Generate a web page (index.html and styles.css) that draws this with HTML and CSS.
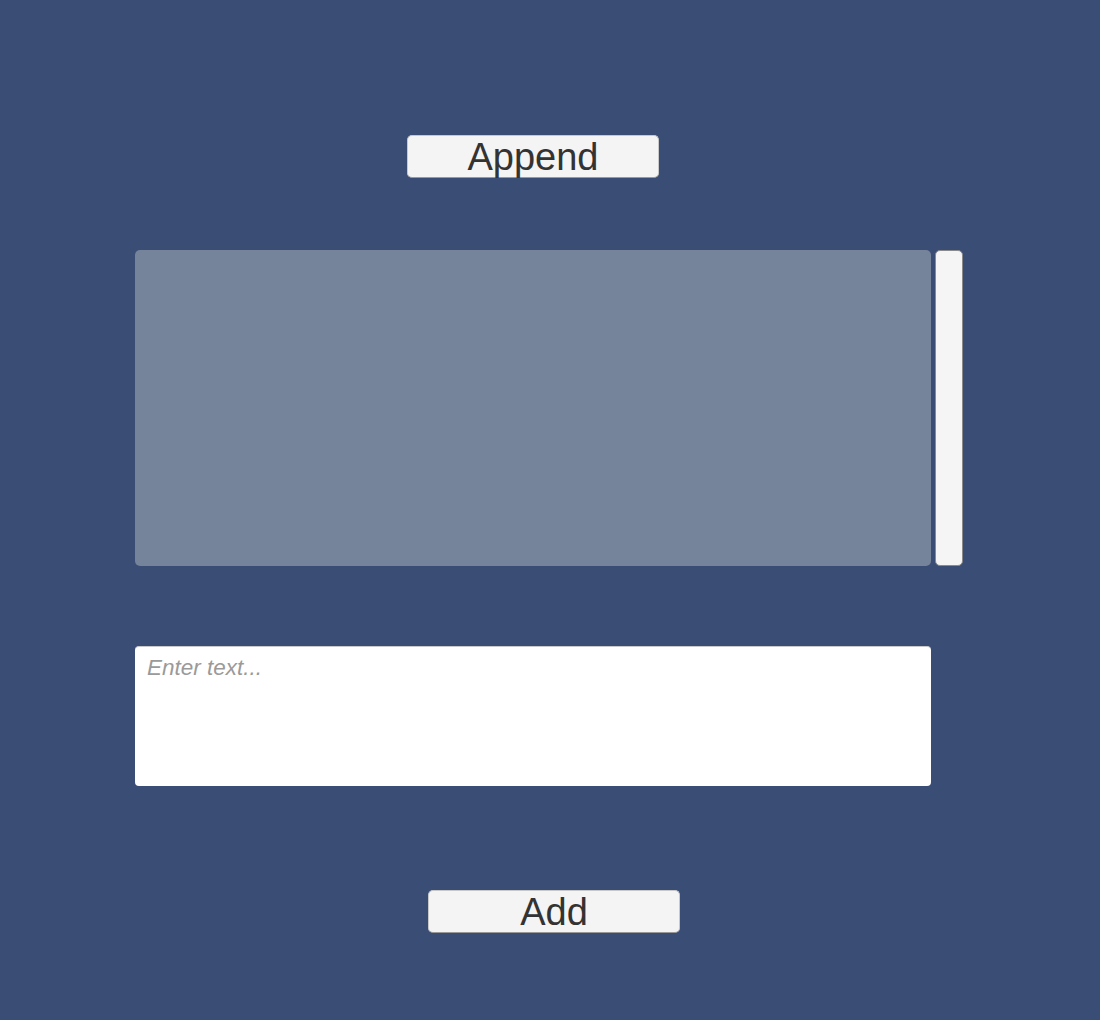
FILE: index.html
```html
<!DOCTYPE html>
<html>
<head>
<meta charset="utf-8">
<link rel="stylesheet" href="styles.css">
</head>
<body>
<div class="page">
  <button class="btn btn-append">Append</button>
  <div class="list-row">
    <div class="list-panel"></div>
    <div class="scrollbar"></div>
  </div>
  <div class="input-box"><span class="placeholder">Enter text...</span></div>
  <button class="btn btn-add">Add</button>
</div>
</body>
</html>
```
FILE: styles.css
```css
html, body {
  margin: 0;
  padding: 0;
  background: #3a4e75;
  height: 1020px;
  overflow: hidden;
}
.page {
  display: flex;
  flex-direction: column;
  align-items: flex-start;
  padding: 135px 0 0 135px;
  font-family: "Liberation Sans", Arial, sans-serif;
}
.btn {
  width: 252px;
  height: 43px;
  background: #f4f4f4;
  border: 1px solid #c8c8c8;
  border-bottom-color: #999;
  border-radius: 5px;
  box-sizing: border-box;
  font-family: "Liberation Sans", Arial, sans-serif;
  font-size: 38px;
  line-height: 43px;
  color: #333;
  padding: 0;
  text-align: center;
}
.btn-append {
  margin-left: 272px;
}
.btn-add {
  margin-left: 293px;
  margin-top: 104px;
}
.list-row {
  display: flex;
  gap: 4px;
  margin-top: 72px;
  height: 316px;
}
.list-panel {
  width: 796px;
  background: #75849a;
  border-radius: 5px;
}
.scrollbar {
  width: 28px;
  background: #f5f5f5;
  border: 1px solid #8a8a8a;
  border-radius: 5px;
  box-sizing: border-box;
}
.input-box {
  margin-top: 80px;
  width: 796px;
  height: 140px;
  background: #fff;
  border-top: 1px solid #c9c9c9;
  border-radius: 4px;
  box-sizing: border-box;
  padding: 7px 12px;
}
.placeholder {
  font-style: italic;
  font-size: 22.5px;
  color: #9a9a9a;
  line-height: 28px;
}
```
